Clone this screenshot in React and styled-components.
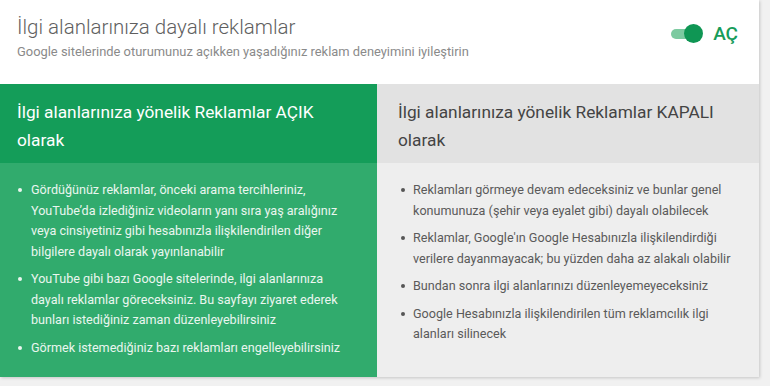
import React from "react";
import styled, { createGlobalStyle } from "styled-components";

const Global = createGlobalStyle`
  html, body { margin: 0; padding: 0; background: #f1f1f1; }
  body { font-family: Roboto, "Liberation Sans", Arial, sans-serif; }
  * { box-sizing: border-box; }
`;

const Page = styled.div`
  width: 770px;
  height: 386px;
  background: #f1f1f1;
  overflow: hidden;
`;

const Card = styled.div`
  width: 759px;
  background: #fff;
  box-shadow: 1px 1px 3px rgba(0, 0, 0, 0.18);
  display: flex;
  flex-direction: column;
`;

const Top = styled.div`
  height: 84px;
  display: flex;
  align-items: flex-start;
  justify-content: space-between;
  padding: 14px 21px 0 17px;
`;

const TitleBlock = styled.div`
  display: flex;
  flex-direction: column;
`;

const Title = styled.h1`
  margin: 0;
  font-size: 20.5px;
  font-weight: 300;
  color: #5f5f5f;
  line-height: 26px;
`;

const Subtitle = styled.p`
  margin: 4px 0 0;
  font-size: 12.9px;
  color: #8a8a8a;
  line-height: 16px;
`;

const ToggleWrap = styled.div`
  display: flex;
  align-items: center;
  margin-top: 8px;
`;

const Track = styled.div`
  position: relative;
  width: 28px;
  height: 10px;
  border-radius: 5px;
  background: #7ccaa0;
  margin-right: 8px;
`;

const Knob = styled.div`
  position: absolute;
  right: -4px;
  top: -4.5px;
  width: 19px;
  height: 19px;
  border-radius: 50%;
  background: #0f9654;
`;

const ToggleLabel = styled.span`
  font-size: 19px;
  font-weight: 500;
  color: #169c5a;
  margin-left: 6px;
`;

const Columns = styled.div`
  display: flex;
  height: 293px;
`;

const Column = styled.div`
  display: flex;
  flex-direction: column;
  width: ${(p) => p.$w}px;
  background: ${(p) => p.$body};
`;

const ColHead = styled.div`
  height: 79px;
  background: ${(p) => p.$bg};
  color: ${(p) => p.$fg};
  font-size: 17.3px;
  line-height: 28px;
  padding: 14px 30px 0 ${(p) => p.$pad}px;
`;

const List = styled.ul`
  list-style: none;
  margin: 0;
  padding: 17px ${(p) => p.$rpad}px 0 ${(p) => p.$pad}px;
  display: flex;
  flex-direction: column;
  gap: 7px;
`;

const Item = styled.li`
  display: flex;
  align-items: flex-start;
  font-size: 12.6px;
  line-height: 20.5px;
  color: ${(p) => p.$fg};
`;

const Dot = styled.span`
  flex: none;
  width: 4px;
  height: 4px;
  border-radius: 50%;
  background: ${(p) => p.$fg};
  margin: 8px ${(p) => p.$gap}px 0 1px;
`;

const onItems = [
  "Gördüğünüz reklamlar, önceki arama tercihleriniz, YouTube’da izlediğiniz videoların yanı sıra yaş aralığınız veya cinsiyetiniz gibi hesabınızla ilişkilendirilen diğer bilgilere dayalı olarak yayınlanabilir",
  "YouTube gibi bazı Google sitelerinde, ilgi alanlarınıza dayalı reklamlar göreceksiniz. Bu sayfayı ziyaret ederek bunları istediğiniz zaman düzenleyebilirsiniz",
  "Görmek istemediğiniz bazı reklamları engelleyebilirsiniz",
];

const offItems = [
  "Reklamları görmeye devam edeceksiniz ve bunlar genel konumunuza (şehir veya eyalet gibi) dayalı olabilecek",
  "Reklamlar, Google'ın Google Hesabınızla ilişkilendirdiği verilere dayanmayacak; bu yüzden daha az alakalı olabilir",
  "Bundan sonra ilgi alanlarınızı düzenleyemeyeceksiniz",
  "Google Hesabınızla ilişkilendirilen tüm reklamcılık ilgi alanları silinecek",
];

export default function App() {
  return (
    <Page>
      <Global />
      <Card>
        <Top>
          <TitleBlock>
            <Title>İlgi alanlarınıza dayalı reklamlar</Title>
            <Subtitle>
              Google sitelerinde oturumunuz açıkken yaşadığınız reklam deneyimini iyileştirin
            </Subtitle>
          </TitleBlock>
          <ToggleWrap>
            <Track>
              <Knob />
            </Track>
            <ToggleLabel>AÇ</ToggleLabel>
          </ToggleWrap>
        </Top>
        <Columns>
          <Column $w={377} $body="#31ab6d">
            <ColHead $bg="#149d59" $fg="#ffffff" $pad={17}>
              İlgi alanlarınıza yönelik Reklamlar AÇIK olarak
            </ColHead>
            <List $pad={17} $rpad={30}>
              {onItems.map((t) => (
                <Item key={t} $fg="#eaf6ef">
                  <Dot $fg="#eaf6ef" $gap={9} />
                  <span>{t}</span>
                </Item>
              ))}
            </List>
          </Column>
          <Column $w={382} $body="#eeeeee">
            <ColHead $bg="#e2e2e2" $fg="#444444" $pad={21}>
              İlgi alanlarınıza yönelik Reklamlar KAPALI olarak
            </ColHead>
            <List $pad={23} $rpad={18}>
              {offItems.map((t) => (
                <Item key={t} $fg="#5a5a5a">
                  <Dot $fg="#555555" $gap={8} />
                  <span>{t}</span>
                </Item>
              ))}
            </List>
          </Column>
        </Columns>
      </Card>
    </Page>
  );
}
